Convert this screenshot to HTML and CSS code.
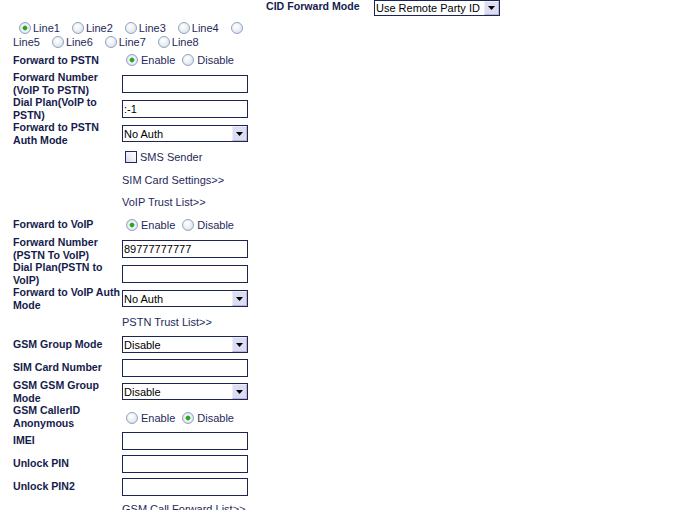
FILE: index.html
```html
<!DOCTYPE html>
<html>
<head>
<meta charset="utf-8">
<link rel="stylesheet" href="styles.css">
</head>
<body>
<div class="top">
  <div class="lbl top-lbl">CID Forward Mode</div>
  <div class="sel"><select><option>Use Remote Party ID</option></select><span class="arrow"><svg width="7" height="4" viewBox="0 0 7 4"><path d="M0 0H7L3.5 4Z" fill="#000"/></svg></span></div>
</div>
<div class="form">
  <div class="lines">
    <span class="lopt first"><input type="radio" name="line" class="rd" checked><span>Line1</span></span><span class="lopt"><input type="radio" name="line" class="rd"><span>Line2</span></span><span class="lopt"><input type="radio" name="line" class="rd"><span>Line3</span></span><span class="lopt"><input type="radio" name="line" class="rd"><span>Line4</span></span><span class="lopt"><input type="radio" name="line" class="rd"></span><br><span class="lopt"><span class="nogap">Line5</span></span><span class="lopt"><input type="radio" name="line" class="rd"><span>Line6</span></span><span class="lopt"><input type="radio" name="line" class="rd"><span>Line7</span></span><span class="lopt"><input type="radio" name="line" class="rd"><span>Line8</span></span>
  </div>

  <div class="row r22"><div class="lbl">Forward to PSTN</div><div class="radios"><input type="radio" name="fp" class="rd" checked><span>Enable</span><input type="radio" name="fp" class="rd"><span>Disable</span></div></div>
  <div class="row r25"><div class="lbl">Forward Number<br>(VoIP To PSTN)</div><div><input class="txt" type="text" value=""></div></div>
  <div class="row r25"><div class="lbl">Dial Plan(VoIP to<br>PSTN)</div><div><input class="txt" type="text" value=":-1"></div></div>
  <div class="row r25"><div class="lbl">Forward to PSTN<br>Auth Mode</div><div class="sel"><select><option>No Auth</option></select><span class="arrow"><svg width="7" height="4" viewBox="0 0 7 4"><path d="M0 0H7L3.5 4Z" fill="#000"/></svg></span></div></div>
  <div class="row r22"><div></div><div class="chk"><input type="checkbox" class="cb"><span>SMS Sender</span></div></div>
  <div class="row r23"><div></div><div><a class="link">SIM Card Settings&gt;&gt;</a></div></div>
  <div class="row r22"><div></div><div><a class="link">VoIP Trust List&gt;&gt;</a></div></div>

  <div class="row r23"><div class="lbl">Forward to VoIP</div><div class="radios"><input type="radio" name="fv" class="rd" checked><span>Enable</span><input type="radio" name="fv" class="rd"><span>Disable</span></div></div>
  <div class="row r25"><div class="lbl">Forward Number<br>(PSTN To VoIP)</div><div><input class="txt" type="text" value="89777777777"></div></div>
  <div class="row r25"><div class="lbl">Dial Plan(PSTN to<br>VoIP)</div><div><input class="txt" type="text" value=""></div></div>
  <div class="row r25"><div class="lbl">Forward to VoIP Auth<br>Mode</div><div class="sel"><select><option>No Auth</option></select><span class="arrow"><svg width="7" height="4" viewBox="0 0 7 4"><path d="M0 0H7L3.5 4Z" fill="#000"/></svg></span></div></div>
  <div class="row r22"><div></div><div><a class="link">PSTN Trust List&gt;&gt;</a></div></div>

  <div class="row r23"><div class="lbl">GSM Group Mode</div><div class="sel"><select><option>Disable</option></select><span class="arrow"><svg width="7" height="4" viewBox="0 0 7 4"><path d="M0 0H7L3.5 4Z" fill="#000"/></svg></span></div></div>
  <div class="row r23"><div class="lbl">SIM Card Number</div><div><input class="txt" type="text" value=""></div></div>
  <div class="row r25"><div class="lbl">GSM GSM Group<br>Mode</div><div class="sel"><select><option>Disable</option></select><span class="arrow"><svg width="7" height="4" viewBox="0 0 7 4"><path d="M0 0H7L3.5 4Z" fill="#000"/></svg></span></div></div>
  <div class="row r25"><div class="lbl">GSM CallerID<br>Anonymous</div><div class="radios low"><input type="radio" name="ga" class="rd"><span>Enable</span><input type="radio" name="ga" class="rd" checked><span>Disable</span></div></div>
  <div class="row r23"><div class="lbl">IMEI</div><div><input class="txt" type="text" value=""></div></div>
  <div class="row r23"><div class="lbl">Unlock PIN</div><div><input class="txt" type="text" value=""></div></div>
  <div class="row r23"><div class="lbl">Unlock PIN2</div><div><input class="txt" type="text" value=""></div></div>
  <div class="row r22"><div></div><div><a class="link">GSM Call Forward List&gt;&gt;</a></div></div>
</div>
</body>
</html>
```
FILE: styles.css
```css
html, body {
  margin: 0;
  padding: 0;
  background: #ffffff;
}
body {
  font-family: "Liberation Sans", Arial, sans-serif;
  font-size: 11px;
  color: #1f2a5a;
  overflow: hidden;
}
.top {
  display: flex;
  align-items: flex-start;
  height: 21px;
  padding-left: 266px;
}
.top-lbl {
  width: 108px;
  line-height: 16px;
}
.lbl {
  font-weight: bold;
  font-size: 10.6px;
  line-height: 12.5px;
  color: #161c4c;
  white-space: nowrap;
}
.form {
  padding-left: 13px;
}
.lines {
  line-height: 14px;
  height: 28px;
  white-space: nowrap;
}
.lopt {
  display: inline-flex;
  align-items: center;
  margin-right: 12px;
  vertical-align: top;
  height: 14px;
}
.lopt.first {
  margin-left: 6px;
}
.lopt .rd {
  margin: 0 2px 0 0;
}
.row {
  display: grid;
  grid-template-columns: 109px 126px;
  align-items: center;
}
.r22 { height: 22px; }
.r23 { height: 23px; }
.r25 { height: 25px; }
.rd {
  -webkit-appearance: none;
  appearance: none;
  width: 12px;
  height: 12px;
  border-radius: 50%;
  border: 1px solid #8ea3c4;
  background: radial-gradient(circle at 40% 35%, #ffffff 0%, #eef0f4 45%, #d4d8e2 100%);
  box-sizing: border-box;
  margin: 0;
  flex: none;
}
.rd:checked {
  background: radial-gradient(circle at 50% 50%, #2aa52a 0, #2aa52a 1.6px, #7ecb7e 2.4px, #ffffff 2.8px, #eef0f4 45%, #d4d8e2 100%);
}
.radios {
  display: flex;
  align-items: center;
  height: 14px;
}
.radios.low {
  margin-top: 3px;
}
.radios .rd {
  margin-left: 4px;
  margin-right: 3px;
}
.radios .rd + span + .rd {
  margin-left: 7px;
}
.txt {
  box-sizing: border-box;
  width: 126px;
  height: 18px;
  border: 1px solid #1c2556;
  margin: 0;
  padding: 0 1px;
  font-family: "Liberation Sans", Arial, sans-serif;
  font-size: 11px;
  color: #000;
  background: #fff;
  outline: none;
  display: block;
}
.sel {
  position: relative;
  width: 126px;
  height: 17px;
}
.top .sel {
  height: 16px;
}
.sel select {
  -webkit-appearance: none;
  appearance: none;
  box-sizing: border-box;
  width: 126px;
  height: 100%;
  border: 1px solid #1c2556;
  border-radius: 0;
  margin: 0;
  padding: 0 0 0 1px;
  font-family: "Liberation Sans", Arial, sans-serif;
  font-size: 11px;
  color: #000;
  background: #fff;
  display: block;
}
.arrow {
  position: absolute;
  right: 1px;
  top: 1px;
  bottom: 1px;
  width: 15px;
  box-sizing: border-box;
  background: #dcdcf2;
  border: 1px solid #eeeefa;
  border-right-color: #b8b8d4;
  border-bottom-color: #b8b8d4;
  display: flex;
  align-items: center;
  justify-content: center;
  pointer-events: none;
}
.chk {
  display: flex;
  align-items: center;
}
.cb {
  -webkit-appearance: none;
  appearance: none;
  width: 12px;
  height: 12px;
  box-sizing: border-box;
  border: 1px solid #1c2a6a;
  background: linear-gradient(45deg, #d6d6e6 0%, #f4f4f8 60%, #ffffff 100%);
  margin: 0 3px 0 3px;
}
.link {
  color: #1f2a5a;
  text-decoration: none;
  white-space: nowrap;
}
```
